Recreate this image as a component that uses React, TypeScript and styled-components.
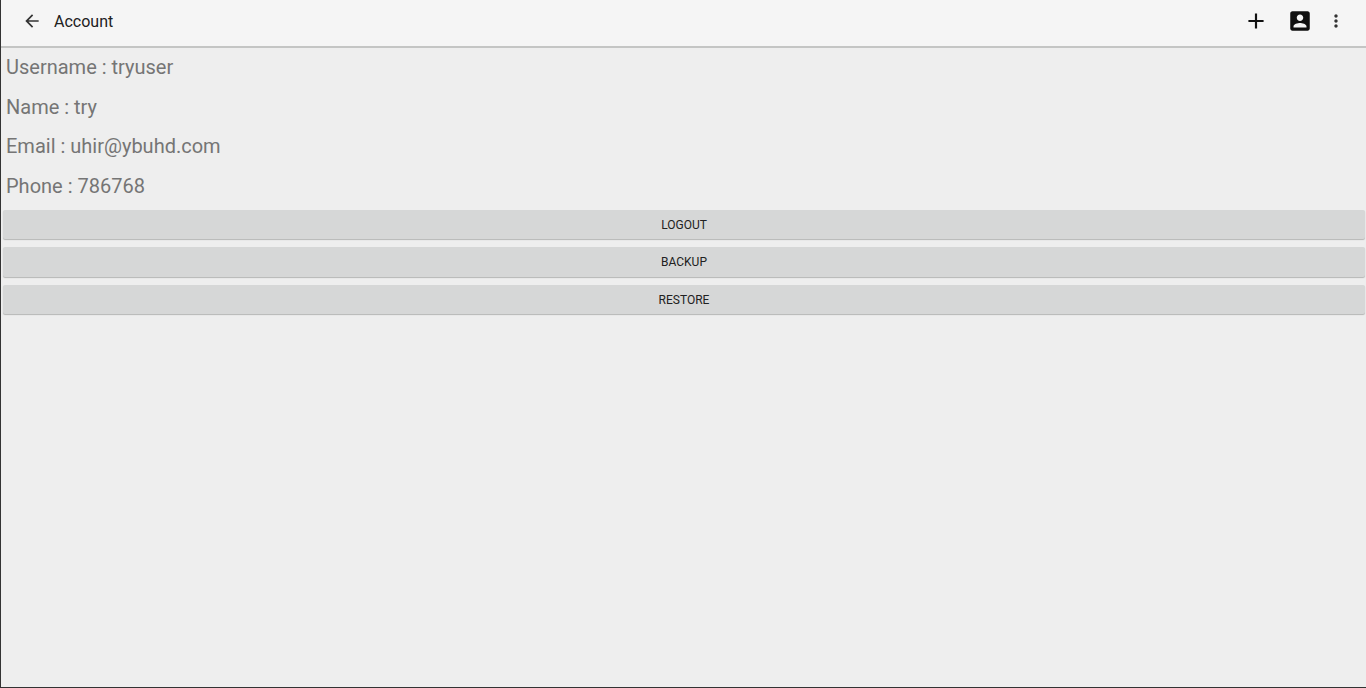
import styled, { createGlobalStyle } from "styled-components";

const GlobalStyle = createGlobalStyle`
  html, body {
    margin: 0;
    padding: 0;
    background: #eeeeee;
  }
`;

const Screen = styled.div`
  box-sizing: border-box;
  width: 1366px;
  height: 688px;
  overflow: hidden;
  background: #eeeeee;
  border-left: 1px solid #333;
  border-bottom: 1px solid #333;
  font-family: Roboto, "Liberation Sans", sans-serif;
`;

const Toolbar = styled.header`
  box-sizing: border-box;
  display: flex;
  align-items: center;
  height: 48px;
  padding: 0 16px 4px 21px;
  background: #f5f5f5;
  border-bottom: 2px solid #c4c5c4;
`;

const Title = styled.h1`
  flex: 1;
  margin: 0 0 0 12px;
  font-size: 16px;
  font-weight: 400;
  color: #212121;
`;

const Actions = styled.div`
  display: flex;
  align-items: center;
`;

const ActionSlot = styled.div<{ $width: number }>`
  display: flex;
  justify-content: center;
  width: ${(p) => p.$width}px;
`;

const Icon = styled.svg<{ $size: number }>`
  display: block;
  width: ${(p) => p.$size}px;
  height: ${(p) => p.$size}px;
  fill: ${(p) => (p.$size < 24 ? "#333" : "#111")};
`;

const Details = styled.section`
  display: flex;
  flex-direction: column;
  padding: 0 0 3px 5px;
`;

const Field = styled.p`
  margin: 0;
  height: 39.7px;
  line-height: 39.7px;
  font-size: 20px;
  color: #757575;
`;

const Buttons = styled.div`
  display: flex;
  flex-direction: column;
  gap: 8px;
  padding: 0 0 0 2px;
`;

const Button = styled.button`
  box-sizing: border-box;
  width: 1362px;
  height: 29.5px;
  margin: 0;
  padding: 0;
  border: 0;
  border-radius: 2px;
  background: #d6d7d7;
  box-shadow: 0 1px 1px #b5b6b5;
  font-family: inherit;
  font-size: 12px;
  font-weight: 400;
  color: #212121;
`;

const fields = [
  "Username : tryuser",
  "Name : try",
  "Email : uhir@ybuhd.com",
  "Phone : 786768",
];

export default function App() {
  return (
    <Screen>
      <GlobalStyle />
      <Toolbar>
        <Icon $size={20} viewBox="0 0 24 24">
          <path d="M20 11H7.83l5.59-5.59L12 4l-8 8 8 8 1.41-1.41L7.83 13H20v-2z" />
        </Icon>
        <Title>Account</Title>
        <Actions>
          <ActionSlot $width={44}>
            <Icon $size={26} viewBox="0 0 24 24">
              <path d="M19 13h-6v6h-2v-6H5v-2h6V5h2v6h6v2z" />
            </Icon>
          </ActionSlot>
          <ActionSlot $width={44}>
            <Icon $size={26} viewBox="0 0 24 24">
              <path d="M3 5v14c0 1.1.89 2 2 2h14c1.1 0 2-.9 2-2V5c0-1.1-.9-2-2-2H5c-1.11 0-2 .9-2 2zm12 4c0 1.66-1.34 3-3 3s-3-1.34-3-3 1.34-3 3-3 3 1.34 3 3zm-9 8c0-2 4-3.1 6-3.1s6 1.1 6 3.1v1H6v-1z" />
            </Icon>
          </ActionSlot>
          <ActionSlot $width={28}>
            <Icon $size={20} viewBox="0 0 24 24">
              <path d="M12 8c1.1 0 2-.9 2-2s-.9-2-2-2-2 .9-2 2 .9 2 2 2zm0 2c-1.1 0-2 .9-2 2s.9 2 2 2 2-.9 2-2-.9-2-2-2zm0 6c-1.1 0-2 .9-2 2s.9 2 2 2 2-.9 2-2-.9-2-2-2z" />
            </Icon>
          </ActionSlot>
        </Actions>
      </Toolbar>
      <Details>
        {fields.map((f) => (
          <Field key={f}>{f}</Field>
        ))}
      </Details>
      <Buttons>
        <Button>LOGOUT</Button>
        <Button>BACKUP</Button>
        <Button>RESTORE</Button>
      </Buttons>
    </Screen>
  );
}
